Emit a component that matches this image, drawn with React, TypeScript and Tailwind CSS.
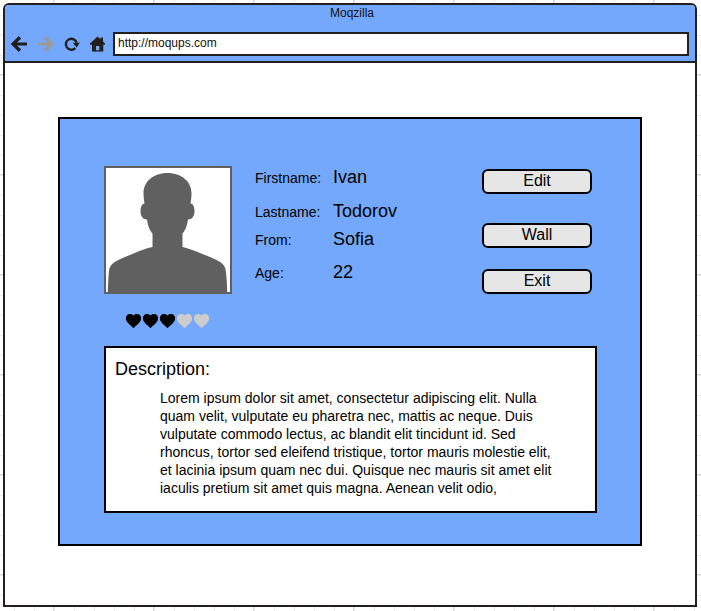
import React from "react";

const sans = "font-['Liberation_Sans',Arial,sans-serif]";

const grid =
  "bg-[repeating-linear-gradient(90deg,#d8d8d8_0_1px,transparent_1px_100px),repeating-linear-gradient(180deg,#d8d8d8_0_1px,transparent_1px_100px),repeating-linear-gradient(90deg,#ebebeb_0_1px,transparent_1px_20px),repeating-linear-gradient(180deg,#ebebeb_0_1px,transparent_1px_20px)] bg-[position:-47px_0,0_-26px,-6px_0,0_-5px] bg-[size:2000px_2000px]";

function BackIcon() {
  return (
    <svg className="size-4" viewBox="0 0 16 16" fill="none" stroke="currentColor" strokeWidth="3" aria-hidden="true">
      <path d="M16 8H3" />
      <path d="M9 1.300 2.200 8 9 14.700" strokeWidth="3.300" />
    </svg>
  );
}

function ForwardIcon() {
  return (
    <svg className="size-4" viewBox="0 0 16 16" fill="none" stroke="currentColor" strokeWidth="3" aria-hidden="true">
      <path d="M1 8H14" />
      <path d="M8 1.300 14.800 8 8 14.700" strokeWidth="3.300" />
    </svg>
  );
}

function ReloadIcon() {
  return (
    <svg className="size-4 overflow-visible" viewBox="0 0 16 16" aria-hidden="true">
      <path d="M12.300 12.100A5.500 5.500 0 1 1 13.700 7" fill="none" stroke="currentColor" strokeWidth="2.400" />
      <path d="M9.500 6.200Q13.500 8 17 6.200L13.700 11.800Z" fill="currentColor" />
    </svg>
  );
}

function HomeIcon() {
  return (
    <svg className="size-4" viewBox="0 0 16 16" fill="currentColor" aria-hidden="true">
      <path d="M8.500 .5 11.400 3.300V1.500H14V5.600L16 7.500V8.800H14.300V15.500H10.300V10H7V15.500H3V8.800H1V7.500Z" />
      <path d="M6 14.300H11V15.500H6Z" />
    </svg>
  );
}

function Avatar() {
  return (
    <svg className="block h-32 w-32 shrink-0 border-2 border-[#606060] bg-white" viewBox="0 0 124 124" role="img" aria-label="Profile picture">
      <path
        fill="#606060"
        d="M61.500 5C76 5 85.500 14 85.500 25C85.500 29 85 32 84.500 35.500C87.500 36 88.500 39 88.500 43.500C88.500 48 86 51.500 82 51.500C81 58 79.500 62 76.500 65.500V79C82 80 93 84.500 104 89C112 92.500 118 95 119.500 101C120.500 107 121 115 121.200 124H1.800C2 115 2.500 107 3.300 101C5 95 11 92.500 19 89C30 84.500 40 80 46.500 79V65.500C43.500 62 42 58 41 51.500C37 51.500 34.500 48 34.500 43.500C34.500 39 36 36 38.500 35.500C38 32 37.500 29 37.500 25C37.500 14 47 5 61.500 5Z"
      />
    </svg>
  );
}

function Heart({ filled }: { filled: boolean }) {
  return (
    <svg className={filled ? "h-4 w-[17px] text-black" : "h-4 w-[17px] text-[#cccccc]"} viewBox="0 0 17 16" fill="currentColor" aria-hidden="true">
      <path d="M8.500 2.600C9.300 1.300 10.700 .9 12 .9C14.500 .9 16.100 2.700 16.100 5.200C16.100 9.200 12.300 11.200 8.500 15.200C4.700 11.200 .9 9.200 .9 5.200C.9 2.700 2.500 .9 5 .9C6.300 .9 7.700 1.300 8.500 2.600Z" />
    </svg>
  );
}

function Rating({ value }: { value: number }) {
  return (
    <div className="flex justify-center pr-0.5" role="img" aria-label={`${value} of 5`}>
      {[1, 2, 3, 4, 5].map((n) => (
        <Heart key={n} filled={n <= value} />
      ))}
    </div>
  );
}

const buttonClass =
  "h-[25px] w-[110px] rounded-md border-2 border-black bg-[#e6e6e6] pb-0.5 text-center text-base leading-5 text-black";

export default function App() {
  return (
    <div className={`flex min-h-screen flex-col bg-white pt-[3px] pr-1 pb-1 pl-[3px] text-black ${sans} ${grid}`}>
      <div className="flex grow flex-col overflow-hidden rounded-t-md border-2 border-[#231f20] bg-white">
        <header className="border-b-2 border-[#231f20] bg-[#74a8fc] pb-[5px] text-[#231f20]">
          <h1 className="pl-1 text-center text-xs leading-4 text-[#111]">Moqzilla</h1>
          <div className="mt-[11px] flex items-center gap-2 px-1.5">
            <nav className="flex items-center gap-2.5">
              <button type="button" aria-label="Back"><BackIcon /></button>
              <button type="button" aria-label="Forward" className="text-[#999]"><ForwardIcon /></button>
              <button type="button" aria-label="Reload"><ReloadIcon /></button>
              <button type="button" aria-label="Home"><HomeIcon /></button>
            </nav>
            <input
              type="text"
              aria-label="Address"
              defaultValue="http://moqups.com"
              className="h-6 min-w-0 grow border-2 border-[#231f20] bg-white px-[3px] pb-0.5 text-xs text-[#111] outline-none"
            />
          </div>
        </header>

        <main className="px-[53px] pt-[54px] pb-[59px]">
          <section className="border-2 border-black bg-[#74a8fc] pt-[47px] pr-[43px] pb-[31px] pl-11">
            <div className="flex items-start">
              <div className="flex flex-col gap-[19px]">
                <Avatar />
                <Rating value={3} />
              </div>
              <dl className="ml-[23px] grid grow grid-cols-[78px_1fr] items-center leading-5">
                <dt className="text-sm">Firstname:</dt>
                <dd className="pb-0.5 text-lg leading-[22px]">Ivan</dd>
                <dt className="mt-2.5 text-sm">Lastname:</dt>
                <dd className="mt-2.5 pb-0.5 text-lg leading-[22px]">Todorov</dd>
                <dt className="mt-1 text-sm">From:</dt>
                <dd className="mt-1 pb-0.5 text-lg leading-[22px]">Sofia</dd>
                <dt className="mt-[9px] text-sm">Age:</dt>
                <dd className="mt-[9px] pb-0.5 text-lg leading-[22px]">22</dd>
              </dl>
              <div className="mr-[5px] flex flex-col pt-[3px]">
                <button type="button" className={buttonClass}>Edit</button>
                <button type="button" className={`mt-[29px] ${buttonClass}`}>Wall</button>
                <button type="button" className={`mt-[21px] ${buttonClass}`}>Exit</button>
              </div>
            </div>
            <div className="mt-[17px] border-2 border-black bg-white px-[9px] pt-[9px] pb-[14px]">
              <h2 className="text-lg leading-6">Description:</h2>
              <p className="mt-2 pr-6 pl-[45px] text-sm leading-[18px]">
                Lorem ipsum dolor sit amet, consectetur adipiscing elit. Nulla quam velit, vulputate eu pharetra nec, mattis ac neque. Duis vulputate commodo lectus, ac blandit elit tincidunt id. Sed rhoncus, tortor sed eleifend tristique, tortor mauris molestie elit, et lacinia ipsum quam nec dui. Quisque nec mauris sit amet elit iaculis pretium sit amet quis magna. Aenean velit odio,
              </p>
            </div>
          </section>
        </main>
      </div>
    </div>
  );
}
